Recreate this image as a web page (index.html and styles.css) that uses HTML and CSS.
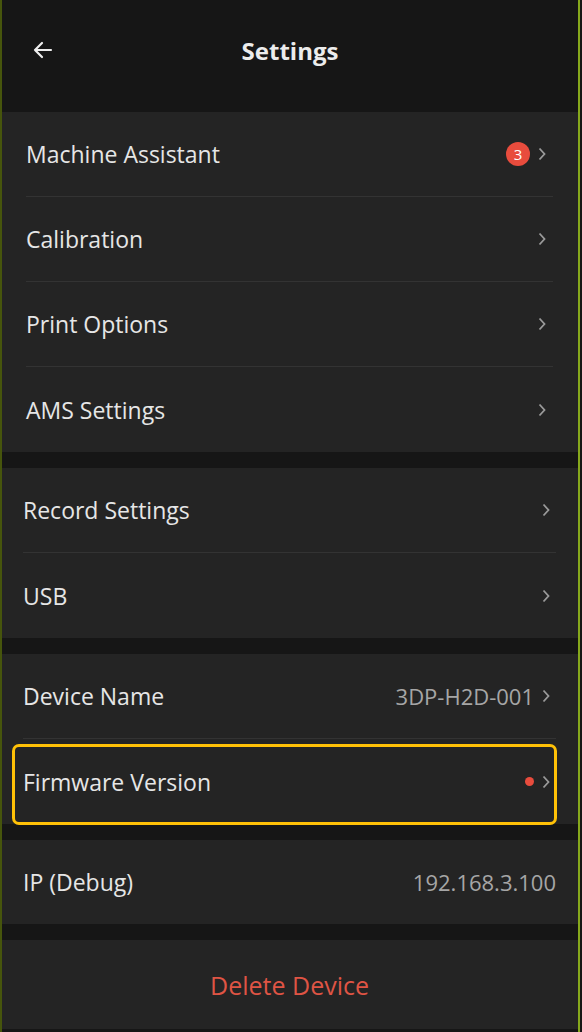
FILE: index.html
```html
<!doctype html>
<html lang="en">
<head>
<meta charset="UTF-8">
<title>Settings</title>
<link rel="stylesheet" href="styles.css">
</head>
<body>
<div class="screen">
	<div class="topbar">
		<svg class="back" width="20" height="18" viewBox="0 0 20 18"><path d="M18 9H2M9 2L2 9l7 7" fill="none" stroke="#eee" stroke-width="2.2" stroke-linecap="round" stroke-linejoin="round"/></svg>
		<h1>Settings</h1>
	</div>

	<div class="group wide">
		<div class="row"><span class="label">Machine Assistant</span><span class="badge">3</span><svg class="chev" width="8" height="14" viewBox="0 0 8 14"><path d="M1.5 1.5L6.5 7l-5 5.5" fill="none" stroke="#9a9a9a" stroke-width="1.8"/></svg></div>
		<div class="row"><span class="label">Calibration</span><svg class="chev" width="8" height="14" viewBox="0 0 8 14"><path d="M1.5 1.5L6.5 7l-5 5.5" fill="none" stroke="#9a9a9a" stroke-width="1.8"/></svg></div>
		<div class="row"><span class="label">Print Options</span><svg class="chev" width="8" height="14" viewBox="0 0 8 14"><path d="M1.5 1.5L6.5 7l-5 5.5" fill="none" stroke="#9a9a9a" stroke-width="1.8"/></svg></div>
		<div class="row"><span class="label">AMS Settings</span><svg class="chev" width="8" height="14" viewBox="0 0 8 14"><path d="M1.5 1.5L6.5 7l-5 5.5" fill="none" stroke="#9a9a9a" stroke-width="1.8"/></svg></div>
	</div>

	<div class="group">
		<div class="row"><span class="label">Record Settings</span><svg class="chev" width="8" height="14" viewBox="0 0 8 14"><path d="M1.5 1.5L6.5 7l-5 5.5" fill="none" stroke="#9a9a9a" stroke-width="1.8"/></svg></div>
		<div class="row"><span class="label">USB</span><svg class="chev" width="8" height="14" viewBox="0 0 8 14"><path d="M1.5 1.5L6.5 7l-5 5.5" fill="none" stroke="#9a9a9a" stroke-width="1.8"/></svg></div>
	</div>

	<div class="group">
		<div class="row"><span class="label">Device Name</span><span class="value">3DP-H2D-001</span><svg class="chev" width="8" height="14" viewBox="0 0 8 14"><path d="M1.5 1.5L6.5 7l-5 5.5" fill="none" stroke="#9a9a9a" stroke-width="1.8"/></svg></div>
		<div class="row"><span class="label">Firmware Version</span><span class="dot"></span><svg class="chev" width="8" height="14" viewBox="0 0 8 14"><path d="M1.5 1.5L6.5 7l-5 5.5" fill="none" stroke="#9a9a9a" stroke-width="1.8"/></svg><div class="highlight"></div></div>
	</div>

	<div class="group">
		<div class="row short"><span class="label">IP (Debug)</span><span class="value last">192.168.3.100</span></div>
	</div>

	<div class="group">
		<div class="row danger">Delete Device</div>
	</div>
</div>
</body>
</html>
```

FILE: styles.css
```css
html,body{margin:0;padding:0;background:#161616;}
body{font-family:"Open Sans","Noto Sans",sans-serif;color:#e8e8e8;}
.screen{width:576px;min-height:1032px;background:#161616;border-left:2px solid #46550c;border-right:2px solid #86a81c;}
.topbar{height:112px;position:relative;display:flex;align-items:center;justify-content:center;padding-bottom:12px;box-sizing:border-box;}
.topbar h1{margin:0;font-size:24px;font-weight:700;color:#ececec;}
.back{position:absolute;left:31px;top:41px;}
.group{background:#242424;padding:0 22px 0 21px;margin-bottom:16px;}
.group.wide{padding:0 25px 0 24px;}
.row{height:85px;box-sizing:border-box;display:flex;align-items:center;border-bottom:1px solid #333;font-size:23px;position:relative;}
.row:last-child{border-bottom:0;}
.row.short{height:84px;}
.label{flex:1;color:#e6e6e6;}
.value{color:#a6a6a6;font-size:22px;margin-right:8px;}
.value.last{margin-right:0;}
.chev{margin-right:6px;}
.group.wide .chev{margin-right:7px;}
.badge{width:24px;height:24px;border-radius:50%;background:#e84c3d;color:#fff;font-size:15px;display:flex;align-items:center;justify-content:center;margin-right:8px;}
.dot{width:9px;height:9px;border-radius:50%;background:#e84c3d;margin-right:8px;}
.highlight{position:absolute;left:-11px;right:-1px;top:5px;bottom:-1px;border:3px solid #ffc107;border-radius:7px;}
.danger{justify-content:center;color:#df5444;height:89px;font-size:25px;}
```
